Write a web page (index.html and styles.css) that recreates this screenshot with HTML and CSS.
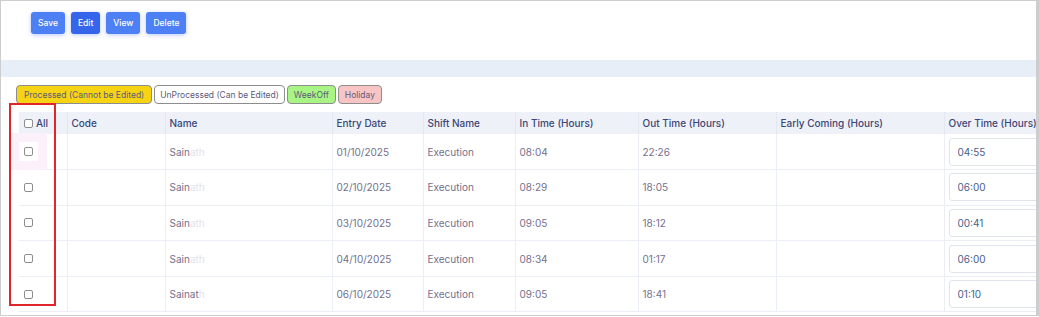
FILE: index.html
```html
<!DOCTYPE html>
<html lang="en">
<head>
    <meta charset="UTF-8">
    <meta name="viewport" content="width=device-width, initial-scale=1.0">
    <title>Attendance Entry</title>
    <link rel="stylesheet" href="styles.css">
</head>
<body>
    <div class="frame">
        <div class="actions">
            <button class="btn">Save</button>
            <button class="btn btn-active">Edit</button>
            <button class="btn">View</button>
            <button class="btn">Delete</button>
        </div>
        <div class="band"></div>
        <div class="legend">
            <span class="tag tag-processed">Processed (Cannot be Edited)</span>
            <span class="tag tag-unprocessed">UnProcessed (Can be Edited)</span>
            <span class="tag tag-weekoff">WeekOff</span>
            <span class="tag tag-holiday">Holiday</span>
        </div>
        <div class="table-wrap">
            <table class="grid">
                <colgroup>
                    <col style="width:48px">
                    <col style="width:98px">
                    <col style="width:167px">
                    <col style="width:91px">
                    <col style="width:92px">
                    <col style="width:123px">
                    <col style="width:138px">
                    <col style="width:168px">
                    <col style="width:130px">
                </colgroup>
                <thead>
                    <tr>
                        <th class="check-col"><label class="all"><input type="checkbox" class="chk"> All</label></th>
                        <th>Code</th>
                        <th>Name</th>
                        <th>Entry Date</th>
                        <th>Shift Name</th>
                        <th>In Time (Hours)</th>
                        <th>Out Time (Hours)</th>
                        <th>Early Coming (Hours)</th>
                        <th>Over Time (Hours)</th>
                    </tr>
                </thead>
                <tbody id="rows"></tbody>
            </table>
            <div class="marker"></div>
        </div>
    </div>

    <script>
        const rows = [
            { name: ['Sain', 'ath'], date: '01/10/2025', shift: 'Execution', inTime: '08:04', outTime: '22:26', ot: '04:55', focus: true },
            { name: ['Sain', 'ath'], date: '02/10/2025', shift: 'Execution', inTime: '08:29', outTime: '18:05', ot: '06:00' },
            { name: ['Sain', 'ath'], date: '03/10/2025', shift: 'Execution', inTime: '09:05', outTime: '18:12', ot: '00:41' },
            { name: ['Sain', 'ath'], date: '04/10/2025', shift: 'Execution', inTime: '08:34', outTime: '01:17', ot: '06:00' },
            { name: ['Sainat', 'h'], date: '06/10/2025', shift: 'Execution', inTime: '09:05', outTime: '18:41', ot: '01:10' },
        ];

        const body = document.getElementById('rows');

        rows.forEach(row => {
            const tr = document.createElement('tr');
            tr.innerHTML = `
                <td class="check-col"><span class="chk-box${row.focus ? ' focused' : ''}"><input type="checkbox" class="chk"></span></td>
                <td></td>
                <td class="name">${row.name[0]}<span class="blur">${row.name[1]}</span></td>
                <td>${row.date}</td>
                <td>${row.shift}</td>
                <td>${row.inTime}</td>
                <td>${row.outTime}</td>
                <td></td>
                <td class="ot-cell"><input type="text" class="ot" value="${row.ot}"></td>
            `;
            body.appendChild(tr);
        });
    </script>
</body>
</html>
```

FILE: styles.css
```css
body {
    margin: 0;
    font-family: Inter, "Open Sans", sans-serif;
    background-color: #fff;
}
.frame {
    position: relative;
    width: 1039px;
    height: 316px;
    box-sizing: border-box;
    border: 1px solid #cdcdcd;
    border-right: 3px solid #cdcdcd;
    overflow: hidden;
}
.actions {
    display: flex;
    gap: 6px;
    padding: 11px 0 0 30px;
    height: 48px;
}
.btn {
    height: 22px;
    padding: 0 7px;
    border: none;
    border-radius: 3px;
    background-color: #4d7ff5;
    color: #fff;
    font-family: inherit;
    font-size: 8.5px;
    font-weight: 500;
    box-shadow: 0 1px 4px rgba(60, 100, 230, 0.35);
}
.btn-active {
    background-color: #3565ea;
}
.band {
    height: 17px;
    background-color: #e8eef7;
}
.legend {
    display: flex;
    gap: 2px;
    padding: 8px 0 0 15px;
    height: 19px;
}
.tag {
    display: flex;
    align-items: center;
    padding: 0 7px;
    border: 1px solid #8d8d8d;
    border-radius: 4px;
    font-size: 8.5px;
    color: #5d5a78;
}
.tag-processed {
    background-color: #f6d414;
}
.tag-unprocessed {
    padding: 0 5px;
    background-color: #fff;
}
.tag-weekoff {
    padding: 0 6px;
    background-color: #a8f585;
}
.tag-holiday {
    padding: 0 6px;
    background-color: #f9c4c4;
}
.table-wrap {
    padding: 8px 0 0 18px;
}
.grid {
    border-collapse: collapse;
    table-layout: fixed;
    width: 1055px;
    font-size: 10px;
}
.grid th {
    height: 22px;
    padding: 0 4px;
    background-color: #eef2f8;
    color: #3c4678;
    font-weight: 500;
    text-align: left;
    border-right: 1px solid #e2e8f1;
    white-space: nowrap;
}
.grid td {
    height: 35.6px;
    padding: 0 4px;
    color: #74708e;
    border-right: 1px solid #ebeef5;
    border-bottom: 1px solid #ebeef5;
    box-sizing: border-box;
}
.grid .check-col {
    padding-left: 5px;
}
.all {
    display: flex;
    align-items: center;
    gap: 3px;
}
.chk {
    appearance: none;
    width: 9px;
    height: 9px;
    margin: 0;
    border: 1px solid #8e8e8e;
    border-radius: 2px;
    background-color: #fff;
}
.chk-box {
    display: inline-flex;
    align-items: center;
    justify-content: center;
    width: 9px;
    height: 9px;
    padding: 5px;
    margin-left: -5px;
}
.chk-box.focused {
    box-shadow: 0 0 0 9px #fcf0fb;
}
.name {
    color: #8f8daa;
}
.blur {
    color: #e2e2ec;
}
.ot-cell {
    padding-left: 4px;
}
.ot {
    width: 100%;
    height: 28px;
    box-sizing: border-box;
    padding: 0 8px;
    border: 1px solid #e0e4ec;
    border-radius: 3px;
    font-family: inherit;
    font-size: 10px;
    color: #47618c;
}
.marker {
    position: absolute;
    left: 8px;
    top: 102px;
    width: 43px;
    height: 199px;
    border: 2px solid #e0252b;
}
```
